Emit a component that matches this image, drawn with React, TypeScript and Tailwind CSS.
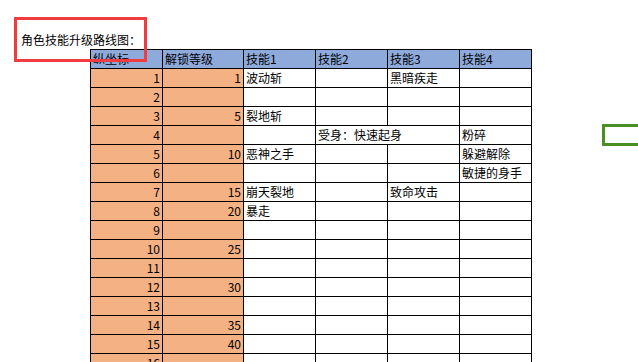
import React from 'react';

type Row = { y: string; lv: string; s: string[]; span?: boolean };

const rows: Row[] = [
    { y: '1', lv: '1', s: ['波动斩', '', '黑暗疾走', ''] },
    { y: '2', lv: '', s: ['', '', '', ''] },
    { y: '3', lv: '5', s: ['裂地斩', '', '', ''] },
    { y: '4', lv: '', s: ['', '受身：快速起身', '粉碎'], span: true },
    { y: '5', lv: '10', s: ['恶神之手', '', '', '躲避解除'] },
    { y: '6', lv: '', s: ['', '', '', '敏捷的身手'] },
    { y: '7', lv: '15', s: ['崩天裂地', '', '致命攻击', ''] },
    { y: '8', lv: '20', s: ['暴走', '', '', ''] },
    { y: '9', lv: '', s: ['', '', '', ''] },
    { y: '10', lv: '25', s: ['', '', '', ''] },
    { y: '11', lv: '', s: ['', '', '', ''] },
    { y: '12', lv: '30', s: ['', '', '', ''] },
    { y: '13', lv: '', s: ['', '', '', ''] },
    { y: '14', lv: '35', s: ['', '', '', ''] },
    { y: '15', lv: '40', s: ['', '', '', ''] },
    { y: '16', lv: '', s: ['', '', '', ''] },
];

const cell = 'h-[19px] border-r border-b border-black leading-[18px] whitespace-nowrap overflow-hidden';

export default function App() {
    return (
        <div
            className="relative w-[638px] h-[362px] overflow-hidden bg-white text-black text-[12px]"
            style={{ fontFamily: '"Noto Sans CJK SC", "Noto Sans", sans-serif' }}
        >
            <p className="pl-[21px] pt-[30px] h-[49px] leading-[19px]">角色技能升级路线图：</p>

            {/* sheet */}
            <div className="ml-[90px] w-[442px] grid grid-cols-[72px_81px_72px_72px_72px_72px] border-l border-t border-black">
                {['纵坐标', '解锁等级', '技能1', '技能2', '技能3', '技能4'].map((h) => (
                    <div key={h} className={`${cell} bg-[#8eaadb] pl-[2px]`}>{h}</div>
                ))}
                {rows.map((r) => (
                    <React.Fragment key={r.y}>
                        <div className={`${cell} bg-[#f4b183] text-right pr-[2px]`}>{r.y}</div>
                        <div className={`${cell} bg-[#f4b183] text-right pr-[2px]`}>{r.lv}</div>
                        {r.span ? (
                            <>
                                <div className={`${cell} pl-[2px]`}>{r.s[0]}</div>
                                <div className={`${cell} col-span-2 pl-[2px]`}>{r.s[1]}</div>
                                <div className={`${cell} pl-[2px]`}>{r.s[2]}</div>
                            </>
                        ) : (
                            r.s.map((t, i) => (
                                <div key={i} className={`${cell} pl-[2px]`}>{t}</div>
                            ))
                        )}
                    </React.Fragment>
                ))}
            </div>

            {/* annotation box */}
            <div className="absolute left-[14px] top-[17px] w-[133px] h-[45px] border-[3px] border-[#f03c3e]" />
            {/* selected cell */}
            <div className="absolute left-[602px] top-[124px] w-[60px] h-[22px] border-[3px] border-[#4a8f24]" />
        </div>
    );
}
